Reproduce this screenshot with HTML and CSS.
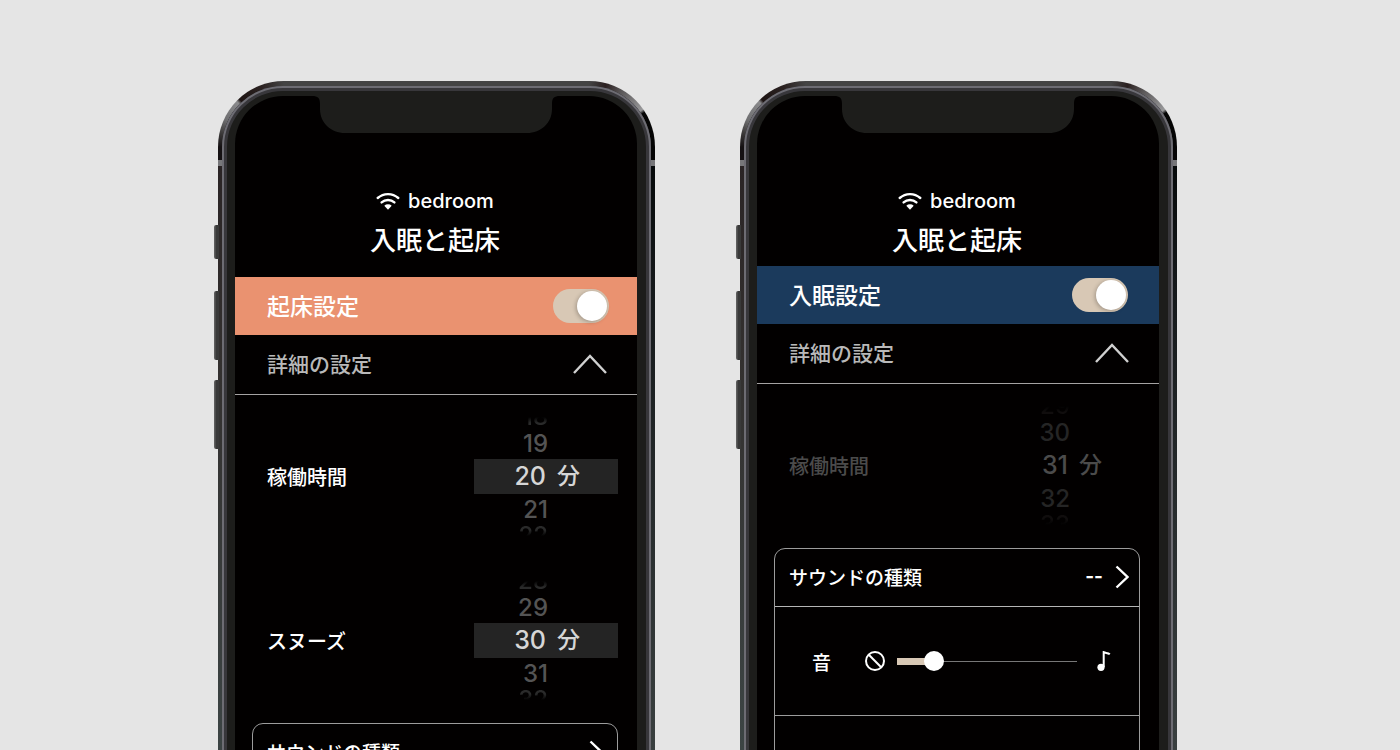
FILE: index.html
```html
<!DOCTYPE html>
<html lang="ja">
<head>
<meta charset="utf-8">
<meta name="viewport" content="width=device-width, initial-scale=1">
<title>入眠と起床</title>
<link rel="stylesheet" href="styles.css">
</head>
<body>
<main class="stage">
  <section class="phone phone-wake">
    <span class="side-button side-button-mute"></span>
    <span class="side-button side-button-up"></span>
    <span class="side-button side-button-down"></span>
    <div class="bezel">
      <div class="screen">
        <svg class="notch" width="248" height="37" viewBox="0 0 248 37" aria-hidden="true"><path d="M0 0C6 0 8 2 8 8v5c0 14 11 24 25 24h182c14 0 25-10 25-24V8c0-6 2-8 8-8z"/></svg>
        <header class="header">
          <p class="room">
            <svg class="wifi" width="24" height="18" viewBox="0 0 24 18" aria-hidden="true"><path d="M1.700 6a15.500 15.500 0 0 1 20.600 0M5.600 10.400a9.600 9.600 0 0 1 12.800 0"/><path class="wifi-dot" d="M8.300 13.800a5.400 5.400 0 0 1 7.400 0L12 17.800z"/></svg>
            <span>bedroom</span>
          </p>
          <h1 class="title">入眠と起床</h1>
        </header>
        <div class="mode mode-wake">
          <label for="wake-on">起床設定</label>
          <input class="toggle" id="wake-on" type="checkbox" role="switch" checked>
        </div>
        <button class="details" type="button" aria-expanded="true">
          <span>詳細の設定</span>
          <svg class="chevron-up" width="36" height="22" viewBox="0 0 36 22" aria-hidden="true"><path d="M2 19L18 2L34 19"/></svg>
        </button>
        <div class="setting">
          <span id="wake-run">稼働時間</span>
          <div class="wheel" role="listbox" aria-labelledby="wake-run">
            <div class="option option-first" role="option">18</div>
            <div class="option" role="option">19</div>
            <div class="option option-selected" role="option" aria-selected="true"><span class="value">20</span><span class="unit">分</span></div>
            <div class="option" role="option">21</div>
            <div class="option option-last" role="option">22</div>
          </div>
        </div>
        <div class="setting">
          <span id="wake-snooze">スヌーズ</span>
          <div class="wheel" role="listbox" aria-labelledby="wake-snooze">
            <div class="option option-first" role="option">28</div>
            <div class="option" role="option">29</div>
            <div class="option option-selected" role="option" aria-selected="true"><span class="value">30</span><span class="unit">分</span></div>
            <div class="option" role="option">31</div>
            <div class="option option-last" role="option">32</div>
          </div>
        </div>
        <div class="card">
          <button class="sound" type="button">
            <span>サウンドの種類</span>
            <svg class="chevron-right" width="14" height="24" viewBox="0 0 14 24" aria-hidden="true"><path d="M1.500 1.500L12.500 12L1.500 22.500"/></svg>
          </button>
        </div>
      </div>
    </div>
  </section>

  <section class="phone phone-sleep">
    <span class="side-button side-button-mute"></span>
    <span class="side-button side-button-up"></span>
    <span class="side-button side-button-down"></span>
    <div class="bezel">
      <div class="screen">
        <svg class="notch" width="248" height="37" viewBox="0 0 248 37" aria-hidden="true"><path d="M0 0C6 0 8 2 8 8v5c0 14 11 24 25 24h182c14 0 25-10 25-24V8c0-6 2-8 8-8z"/></svg>
        <header class="header">
          <p class="room">
            <svg class="wifi" width="24" height="18" viewBox="0 0 24 18" aria-hidden="true"><path d="M1.700 6a15.500 15.500 0 0 1 20.600 0M5.600 10.400a9.600 9.600 0 0 1 12.800 0"/><path class="wifi-dot" d="M8.300 13.800a5.400 5.400 0 0 1 7.400 0L12 17.800z"/></svg>
            <span>bedroom</span>
          </p>
          <h2 class="title">入眠と起床</h2>
        </header>
        <div class="mode mode-sleep">
          <label for="sleep-on">入眠設定</label>
          <input class="toggle" id="sleep-on" type="checkbox" role="switch" checked>
        </div>
        <button class="details" type="button" aria-expanded="true">
          <span>詳細の設定</span>
          <svg class="chevron-up" width="36" height="22" viewBox="0 0 36 22" aria-hidden="true"><path d="M2 19L18 2L34 19"/></svg>
        </button>
        <div class="setting setting-disabled">
          <span id="sleep-run">稼働時間</span>
          <div class="wheel" role="listbox" aria-labelledby="sleep-run" aria-disabled="true">
            <div class="option option-first" role="option">29</div>
            <div class="option" role="option">30</div>
            <div class="option option-selected" role="option" aria-selected="true"><span class="value">31</span><span class="unit">分</span></div>
            <div class="option" role="option">32</div>
            <div class="option option-last" role="option">33</div>
          </div>
        </div>
        <div class="card">
          <button class="sound" type="button">
            <span>サウンドの種類</span>
            <span class="sound-value">--</span>
            <svg class="chevron-right" width="14" height="24" viewBox="0 0 14 24" aria-hidden="true"><path d="M1.500 1.500L12.500 12L1.500 22.500"/></svg>
          </button>
          <div class="volume">
            <label for="volume">音</label>
            <svg class="mute" width="20" height="20" viewBox="0 0 20 20" aria-hidden="true"><circle cx="10" cy="10" r="9"/><path d="M3.800 3.800L16.200 16.200"/></svg>
            <input class="slider" id="volume" type="range" min="0" max="100" value="17">
            <svg class="note" width="14" height="20" viewBox="0 0 14 20" aria-hidden="true"><circle cx="4" cy="16.300" r="3.600"/><path d="M6.700 16V1.200C8.500 2.300 10.800 1.500 12.800 3.300"/></svg>
          </div>
        </div>
      </div>
    </div>
  </section>
</main>
</body>
</html>
```
FILE: styles.css
```css
* {
  box-sizing: border-box;
}

body {
  margin: 0;
  background: #e5e5e5;
  color: #fff;
  font-family: Inter, "Noto Sans CJK JP", sans-serif;
  font-weight: 500;
}

button {
  border: 0;
  background: none;
  font: inherit;
  text-align: left;
}

svg {
  flex: none;
  fill: none;
  stroke: #fff;
}

.stage {
  display: flex;
  justify-content: center;
  gap: 85px;
  height: 100vh;
  padding: 81px 5px 0 0;
  overflow: hidden;
}

/* Metal band: two reflective corners, two sides with antenna lines */
.phone {
  position: relative;
  flex: 0 1 437px;
  display: flex;
  padding: 5px 4px 0;
  border-radius: 66px 66px 0 0;
  background:
    conic-gradient(from 270deg at 100% 100%, #151113 0deg, #3a3838 12deg, #6e6e70 25deg, #8a8a8c 44deg, #1d1413 47deg, #2b2221 70deg, #444 90deg) left top / 66px 66px no-repeat,
    conic-gradient(from 0deg at 0% 100%, #444 0deg, #2b2020 15deg, #5a5758 30deg, #98989a 55deg, #050505 58deg, #050505 90deg) right top / 66px 66px no-repeat,
    linear-gradient(#151113 79px, #77777a 79px, #77777a 85px, #2a2425 85px, #33302f 280px, #3c4444 100%) left top / 66px 100% no-repeat,
    linear-gradient(#050505 79px, #77777a 79px, #77777a 85px, #06090a 85px, #14181a 200px, #3a4040 100%) right top / 66px 100% no-repeat,
    #444;
}

.side-button {
  position: absolute;
  left: -4px;
  width: 5px;
  border-radius: 2px 0 0 2px;
  background: linear-gradient(90deg, #666, #393939 50%);
}

.side-button-mute {
  top: 144px;
  height: 34px;
}

.side-button-up {
  top: 210px;
  height: 69px;
}

.side-button-down {
  top: 299px;
  height: 69px;
}

.bezel {
  flex: 1;
  display: flex;
  min-width: 0;
  margin-bottom: -10px;
  padding: 10px 14px 0 13px;
  border-radius: 61px 61px 0 0;
  background: #1d1d1b;
  box-shadow: inset 0 0 0 2px #6d6c73, inset 0 0 0 5px #38373b;
}

.screen {
  flex: 1;
  min-width: 0;
  overflow: hidden;
  border-radius: 48px 48px 0 0;
  background: #020000;
}

.notch {
  display: block;
  margin: 0 auto;
  fill: #1d1d1b;
  stroke: none;
}

.header {
  padding: 55px 2px 18px 0;
  text-align: center;
}

.phone-sleep .header {
  padding-bottom: 7px;
}

.room {
  display: flex;
  justify-content: center;
  align-items: center;
  gap: 8px;
  margin: 0 0 9px;
  font-size: 20px;
  line-height: 26px;
}

.wifi {
  stroke-width: 2.4;
  stroke-linecap: round;
}

.wifi-dot {
  fill: #fff;
  stroke: none;
}

.title {
  margin: 0;
  font-size: 26px;
  font-weight: 500;
  line-height: 36px;
}

.mode {
  display: flex;
  justify-content: space-between;
  align-items: center;
  height: 58px;
  padding: 0 28px 0 32px;
  font-size: 23px;
}

.mode label,
.details span {
  padding-bottom: 3px;
}

.mode-wake {
  background: #ea9270;
}

.mode-sleep {
  padding-right: 31px;
  background: #1b3a5c;
}

.toggle {
  appearance: none;
  display: flex;
  justify-content: flex-end;
  align-items: center;
  width: 56px;
  height: 34px;
  margin: 0;
  padding: 2px;
  border-radius: 17px;
  background: #d8c8b5;
}

.toggle::before {
  content: "";
  width: 30px;
  height: 30px;
  border-radius: 50%;
  background: #fff;
  box-shadow: -1px 1px 4px #0004;
}

.details {
  display: flex;
  justify-content: space-between;
  align-items: center;
  width: 100%;
  height: 60px;
  padding: 0 29px 0 32px;
  border-bottom: 1px solid #a5a3a3;
  color: #b9b9b9;
  font-size: 21px;
}

.chevron-up {
  stroke: #d0d0d0;
  stroke-width: 2.4;
}

.setting {
  display: flex;
  justify-content: space-between;
  align-items: center;
  height: 164px;
  padding: 0 19px 2px 32px;
  font-size: 20px;
}

.wheel {
  --edge: #2a2a2a;
  width: 144px;
  color: #545454;
  font-size: 24px;
}

.option {
  height: 31px;
  padding-right: 70px;
  line-height: 31px;
  text-align: right;
}

/* The outermost values fade out where the wheel turns away */
.option-first,
.option-last {
  height: 22px;
  line-height: 22px;
  background-clip: text;
  color: transparent;
}

.option-first {
  background-image: linear-gradient(transparent 11px, var(--edge) 17px);
}

.option-last {
  background-image: linear-gradient(var(--edge) 5px, transparent 11px);
}

.option-selected {
  display: flex;
  align-items: center;
  gap: 11px;
  height: 35px;
  padding: 0;
  background: #242424;
  color: #d6d6d6;
  font-size: 25px;
}

.value {
  width: 72px;
}

.unit {
  font-size: 23px;
}

.setting-disabled,
.setting-disabled .option-selected {
  background: none;
  color: #4b4b4b;
}

.setting-disabled .wheel {
  --edge: #100d0d;
  color: #252525;
}

.card {
  height: 300px;
  margin: 0 19px 0 17px;
  border: 1px solid #9c9c9c;
  border-radius: 11px;
}

.sound {
  display: flex;
  justify-content: space-between;
  align-items: center;
  gap: 12px;
  width: 100%;
  height: 58px;
  padding: 0 10px 2px 14px;
  border-bottom: 1px solid #b5b5b5;
  color: #fff;
  font-size: 19px;
}

.phone-wake .sound {
  padding-right: 14px;
}

.sound-value {
  margin-left: auto;
  font-weight: 700;
}

.chevron-right {
  stroke-width: 2.4;
}

.volume {
  display: flex;
  align-items: center;
  height: 109px;
  padding: 0 28px 0 37px;
  border-bottom: 1px solid #9c9c9c;
  font-size: 19px;
}

.mute {
  margin: 0 12px 0 34px;
  stroke-width: 2;
}

.slider {
  appearance: none;
  flex: 1;
  min-width: 0;
  height: 20px;
  margin: 0 20px 0 0;
  background:
    linear-gradient(#d8c8b5, #d8c8b5) left center / 34px 7px no-repeat,
    linear-gradient(#777, #777) left center / 100% 1px no-repeat;
}

.slider::-webkit-slider-thumb {
  appearance: none;
  width: 20px;
  height: 20px;
  border-radius: 50%;
  background: #fff;
}

.note {
  stroke-width: 2;
}

.note circle {
  fill: #fff;
  stroke: none;
}
```
